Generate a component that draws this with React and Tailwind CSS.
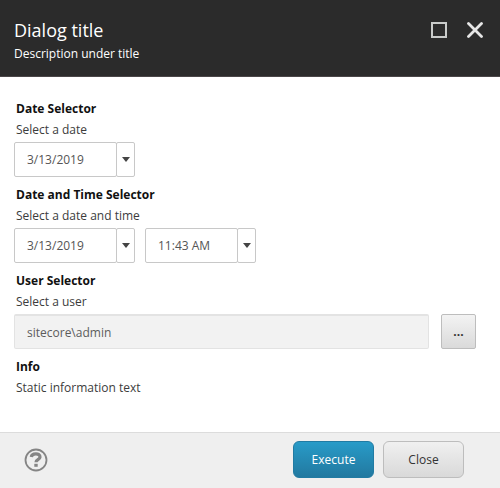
import { useState } from "react"

function PickerField({ id, label, value, onChange, inputWidth }) {
  return (
    <div className="flex h-[35px]">
      <input
        id={id}
        type="text"
        aria-label={label}
        value={value}
        onChange={(e) => onChange(e.target.value)}
        className={`${inputWidth} rounded-xs border border-[#c8c8c8] bg-white pl-3 text-xs text-[#555] outline-none focus:border-[#2a8fbd]`}
      />
      <button
        type="button"
        aria-label={`Open ${label}`}
        className="-ml-px flex w-[19px] items-center justify-center rounded-xs border border-[#c8c8c8] bg-white"
      >
        <svg width="8" height="5" viewBox="0 0 8 5" className="fill-[#444]">
          <path d="M0 0h8L4 5z" />
        </svg>
      </button>
    </div>
  )
}

function Section({ title, description, children }) {
  return (
    <section>
      <h2 className="pl-0.5 text-xs leading-5 font-bold text-[#111]">{title}</h2>
      <p className="pl-0.5 text-xs leading-[21px] text-[#3c3c3c]">{description}</p>
      {children && <div className="mt-0.5 flex">{children}</div>}
    </section>
  )
}

export default function App() {
  const [date, setDate] = useState("3/13/2019")
  const [startDate, setStartDate] = useState("3/13/2019")
  const [startTime, setStartTime] = useState("11:43 AM")

  return (
    <div
      role="dialog"
      aria-labelledby="dialog-title"
      className="flex min-h-screen flex-col bg-white font-['Open_Sans',sans-serif]"
    >
      <header className="flex items-start justify-between border-b border-[#4a4648] bg-[#2b2b2b] pt-[18px] pr-4 pb-3 pl-3.5 text-white">
        <div>
          <h1 id="dialog-title" className="text-lg leading-6">
            Dialog title
          </h1>
          <p className="mt-0.5 text-xs leading-5">Description under title</p>
        </div>
        <div className="mt-1 flex gap-[18px]">
          <button type="button" aria-label="Maximize">
            <svg width="18" height="18" viewBox="0 0 18 18" fill="none" stroke="#c9cbca" strokeWidth="2">
              <rect x="2" y="1" width="14" height="14" />
            </svg>
          </button>
          <button type="button" aria-label="Close dialog">
            <svg width="18" height="18" viewBox="0 0 18 18" fill="none" stroke="#e6e6e6" strokeWidth="2.8" strokeLinecap="round">
              <path d="M2.500 1.500l13 13M15.500 1.500l-13 13" />
            </svg>
          </button>
        </div>
      </header>

      <main className="flex flex-1 flex-col gap-2 px-3.5 pt-[22px] pb-8">
        <Section title="Date Selector" description="Select a date">
          <PickerField id="date" label="Date" value={date} onChange={setDate} inputWidth="w-[103px]" />
        </Section>

        <Section title="Date and Time Selector" description="Select a date and time">
          <div className="flex gap-2.5">
            <PickerField id="start-date" label="Start date" value={startDate} onChange={setStartDate} inputWidth="w-[103px]" />
            <PickerField id="start-time" label="Start time" value={startTime} onChange={setStartTime} inputWidth="w-[93px]" />
          </div>
        </Section>

        <Section title="User Selector" description="Select a user">
          <div className="flex flex-1 gap-3 pr-2.5">
            <input
              id="user"
              type="text"
              aria-label="User"
              readOnly
              value="sitecore\admin"
              className="h-[35px] min-w-0 flex-1 rounded-xs border border-t-2 border-[#e3e3e3] bg-[#f2f2f2] pl-3 text-xs text-[#5c5c5c] outline-none"
            />
            <button
              type="button"
              aria-label="Browse users"
              className="h-[35px] w-[35px] rounded-xs border border-[#bdbdbd] bg-linear-to-b from-[#f3f3f3] to-[#dadada] text-xs font-bold text-[#333]"
            >
              ...
            </button>
          </div>
        </Section>

        <Section title="Info" description="Static information text" />
      </main>

      <footer className="flex items-center justify-between border-t border-[#dcdcdc] bg-[#efefef] pt-2 pr-9 pb-2.5 pl-6">
        <button type="button" aria-label="Help">
          <svg width="24" height="24" viewBox="0 0 24 24" fill="none" stroke="#858585">
            <circle cx="12" cy="12" r="10.500" strokeWidth="1.800" />
            <path d="M7.300 9c.5-4.300 9-4.200 8.700.1-.2 2.700-4 2.400-4 5.100" strokeWidth="3.200" />
            <path d="M10.300 17.300h3.400" strokeWidth="3" />
          </svg>
        </button>
        <div className="flex gap-[9px]">
          <button
            type="button"
            className="h-[37px] w-[81px] rounded-md border border-[#217ba3] bg-linear-to-b from-[#289bc8] to-[#2279a0] text-xs text-white"
          >
            Execute
          </button>
          <button
            type="button"
            className="h-[37px] w-[81px] rounded-md border border-[#bdbdbd] bg-linear-to-b from-[#f0f0f0] to-[#d9d9d9] text-xs text-[#333]"
          >
            Close
          </button>
        </div>
      </footer>
    </div>
  )
}
